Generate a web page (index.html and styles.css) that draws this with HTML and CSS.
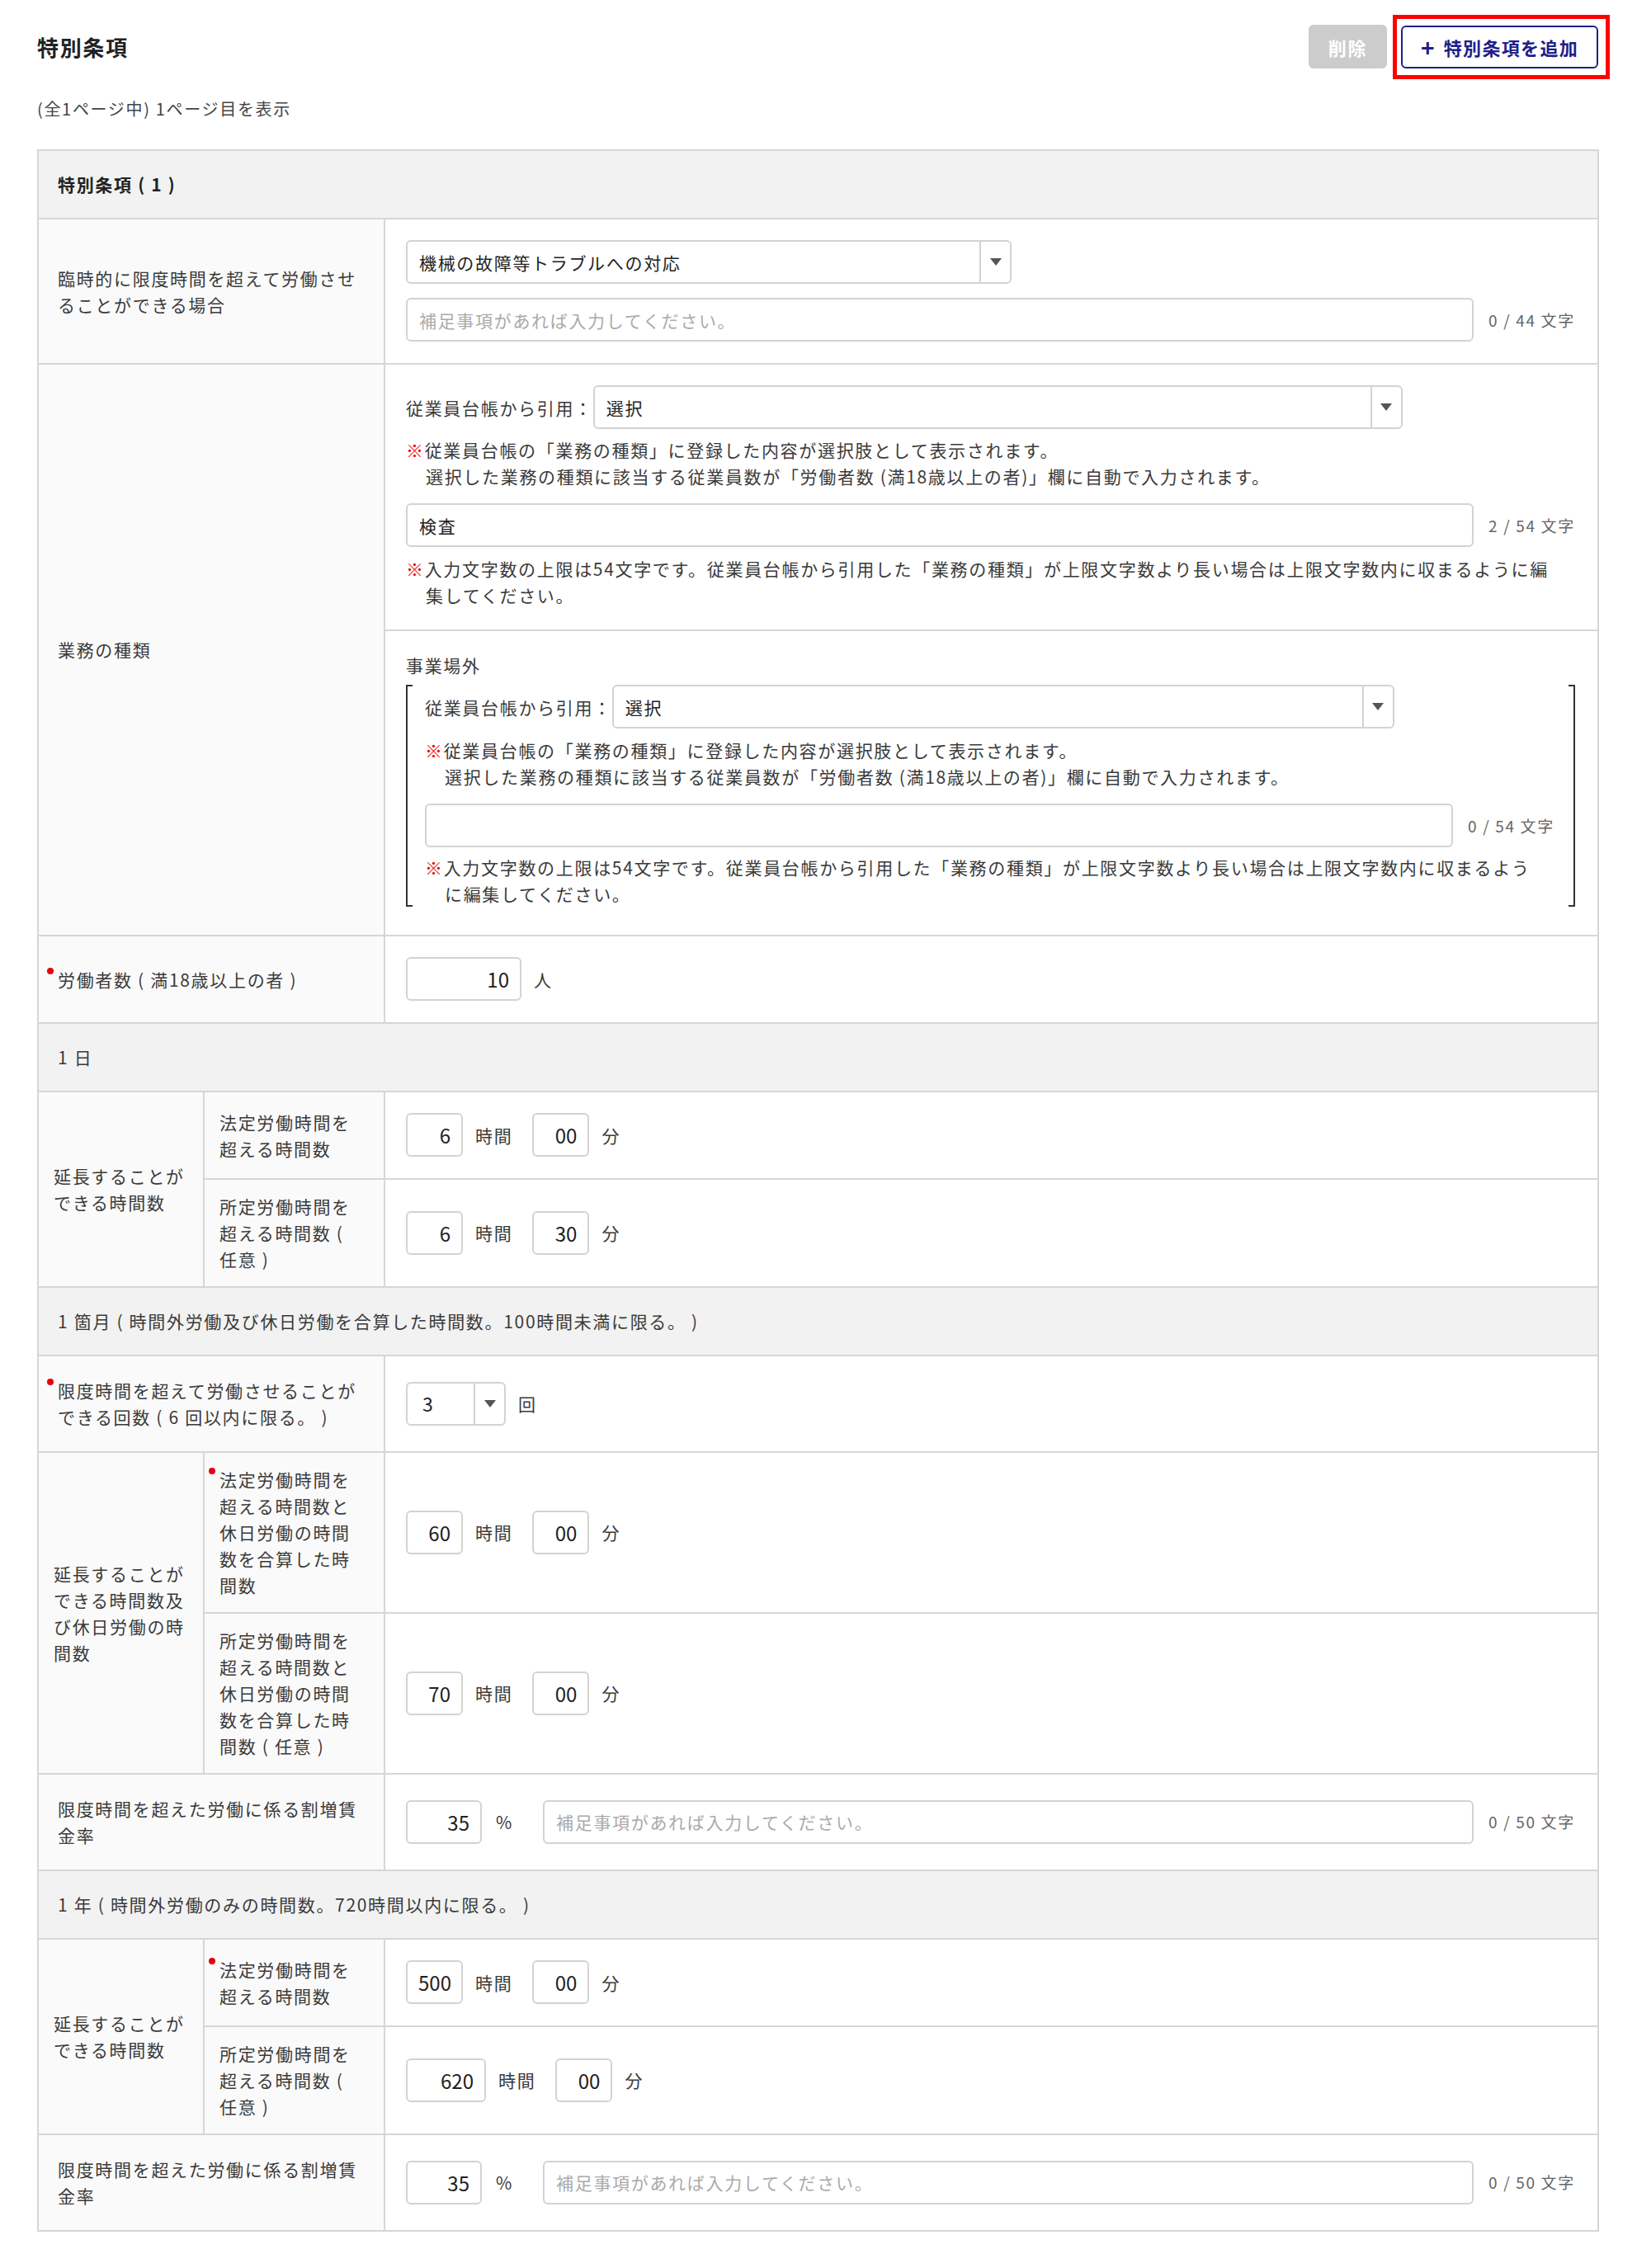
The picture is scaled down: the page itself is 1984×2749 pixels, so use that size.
FILE: index.html
```html
<!DOCTYPE html>
<html lang="ja">
<head>
    <meta charset="UTF-8">
    <meta name="viewport" content="width=device-width, initial-scale=1.0">
    <title>特別条項</title>
    <link rel="stylesheet" href="styles.css">
</head>
<body>
    <div class="page">
        <div class="page-head">
            <h1>特別条項</h1>
            <div class="actions">
                <button class="btn btn-delete" disabled>削除</button>
                <span class="highlight">
                    <button class="btn btn-add"><span class="plus">+</span>特別条項を追加</button>
                </span>
            </div>
        </div>

        <p class="pager">(全1ページ中) 1ページ目を表示</p>

        <table class="form-table">
            <colgroup>
                <col class="col-outer">
                <col class="col-inner">
                <col>
            </colgroup>

            <tr>
                <th colspan="3" class="section-title">特別条項 ( 1 )</th>
            </tr>

            <tr>
                <th colspan="2" class="label">臨時的に限度時間を超えて労働させ<br>ることができる場合</th>
                <td>
                    <div class="select select-reason">
                        <span class="select-value">機械の故障等トラブルへの対応</span>
                        <span class="select-arrow"><span class="caret"></span></span>
                    </div>
                    <div class="field-row">
                        <input class="text-input" type="text" placeholder="補足事項があれば入力してください。">
                        <span class="counter">0 / 44 文字</span>
                    </div>
                </td>
            </tr>

            <tr>
                <th colspan="2" rowspan="2" class="label">業務の種類</th>
                <td>
                    <div class="quote-row">
                        <span class="quote-label">従業員台帳から引用：</span>
                        <div class="select select-job">
                            <span class="select-value">選択</span>
                            <span class="select-arrow"><span class="caret"></span></span>
                        </div>
                    </div>
                    <p class="note"><span class="mark">※</span>従業員台帳の「業務の種類」に登録した内容が選択肢として表示されます。<br>選択した業務の種類に該当する従業員数が「労働者数 (満18歳以上の者)」欄に自動で入力されます。</p>
                    <div class="field-row">
                        <input class="text-input" type="text" value="検査">
                        <span class="counter">2 / 54 文字</span>
                    </div>
                    <p class="note"><span class="mark">※</span>入力文字数の上限は54文字です。従業員台帳から引用した「業務の種類」が上限文字数より長い場合は上限文字数内に収まるように編<br>集してください。</p>
                </td>
            </tr>
            <tr>
                <td class="offsite">
                    <p class="sub-heading">事業場外</p>
                    <div class="bracket">
                        <div class="quote-row">
                            <span class="quote-label">従業員台帳から引用：</span>
                            <div class="select select-job-sub">
                                <span class="select-value">選択</span>
                                <span class="select-arrow"><span class="caret"></span></span>
                            </div>
                        </div>
                        <p class="note"><span class="mark">※</span>従業員台帳の「業務の種類」に登録した内容が選択肢として表示されます。<br>選択した業務の種類に該当する従業員数が「労働者数 (満18歳以上の者)」欄に自動で入力されます。</p>
                        <div class="field-row">
                            <input class="text-input" type="text">
                            <span class="counter">0 / 54 文字</span>
                        </div>
                        <p class="note"><span class="mark">※</span>入力文字数の上限は54文字です。従業員台帳から引用した「業務の種類」が上限文字数より長い場合は上限文字数内に収まるよう<br>に編集してください。</p>
                    </div>
                </td>
            </tr>

            <tr>
                <th colspan="2" class="label"><div class="req">労働者数 ( 満18歳以上の者 )</div></th>
                <td>
                    <div class="inline">
                        <input class="num num-l" type="text" value="10"><span class="unit">人</span>
                    </div>
                </td>
            </tr>

            <tr>
                <th colspan="3" class="group">1 日</th>
            </tr>
            <tr>
                <th rowspan="2" class="outer-label">延長することが<br>できる時間数</th>
                <th class="sub-label">法定労働時間を<br>超える時間数</th>
                <td>
                    <div class="inline">
                        <input class="num" type="text" value="6"><span class="unit">時間</span>
                        <input class="num" type="text" value="00"><span class="unit">分</span>
                    </div>
                </td>
            </tr>
            <tr>
                <th class="sub-label">所定労働時間を<br>超える時間数 (<br>任意 )</th>
                <td>
                    <div class="inline">
                        <input class="num" type="text" value="6"><span class="unit">時間</span>
                        <input class="num" type="text" value="30"><span class="unit">分</span>
                    </div>
                </td>
            </tr>

            <tr>
                <th colspan="3" class="group">1 箇月 ( 時間外労働及び休日労働を合算した時間数。100時間未満に限る。 )</th>
            </tr>
            <tr>
                <th colspan="2" class="label"><div class="req">限度時間を超えて労働させることが<br>できる回数 ( 6 回以内に限る。 )</div></th>
                <td>
                    <div class="inline">
                        <div class="select select-count">
                            <span class="select-value">3</span>
                            <span class="select-arrow"><span class="caret"></span></span>
                        </div>
                        <span class="unit">回</span>
                    </div>
                </td>
            </tr>
            <tr>
                <th rowspan="2" class="outer-label">延長することが<br>できる時間数及<br>び休日労働の時<br>間数</th>
                <th class="sub-label"><div class="req">法定労働時間を<br>超える時間数と<br>休日労働の時間<br>数を合算した時<br>間数</div></th>
                <td>
                    <div class="inline">
                        <input class="num" type="text" value="60"><span class="unit">時間</span>
                        <input class="num" type="text" value="00"><span class="unit">分</span>
                    </div>
                </td>
            </tr>
            <tr>
                <th class="sub-label">所定労働時間を<br>超える時間数と<br>休日労働の時間<br>数を合算した時<br>間数 ( 任意 )</th>
                <td>
                    <div class="inline">
                        <input class="num" type="text" value="70"><span class="unit">時間</span>
                        <input class="num" type="text" value="00"><span class="unit">分</span>
                    </div>
                </td>
            </tr>
            <tr>
                <th colspan="2" class="label">限度時間を超えた労働に係る割増賃<br>金率</th>
                <td>
                    <div class="field-row rate-row">
                        <input class="num num-m" type="text" value="35"><span class="unit unit-rate">%</span>
                        <input class="text-input" type="text" placeholder="補足事項があれば入力してください。">
                        <span class="counter">0 / 50 文字</span>
                    </div>
                </td>
            </tr>

            <tr>
                <th colspan="3" class="group">1 年 ( 時間外労働のみの時間数。720時間以内に限る。 )</th>
            </tr>
            <tr>
                <th rowspan="2" class="outer-label">延長することが<br>できる時間数</th>
                <th class="sub-label"><div class="req">法定労働時間を<br>超える時間数</div></th>
                <td>
                    <div class="inline">
                        <input class="num" type="text" value="500"><span class="unit">時間</span>
                        <input class="num" type="text" value="00"><span class="unit">分</span>
                    </div>
                </td>
            </tr>
            <tr>
                <th class="sub-label">所定労働時間を<br>超える時間数 (<br>任意 )</th>
                <td>
                    <div class="inline">
                        <input class="num num-w" type="text" value="620"><span class="unit">時間</span>
                        <input class="num" type="text" value="00"><span class="unit">分</span>
                    </div>
                </td>
            </tr>
            <tr>
                <th colspan="2" class="label">限度時間を超えた労働に係る割増賃<br>金率</th>
                <td>
                    <div class="field-row rate-row">
                        <input class="num num-m" type="text" value="35"><span class="unit unit-rate">%</span>
                        <input class="text-input" type="text" placeholder="補足事項があれば入力してください。">
                        <span class="counter">0 / 50 文字</span>
                    </div>
                </td>
            </tr>
        </table>
    </div>
</body>
</html>
```

FILE: styles.css
```css
* {
    box-sizing: border-box;
}

body {
    margin: 0;
    background: #fff;
    color: #3a3a3a;
    font-family: "Noto Sans CJK JP", "Noto Sans", sans-serif;
    font-size: 21px;
    line-height: 32px;
    letter-spacing: 0.08em;
}

.page {
    padding: 30px 46px 44px 45px;
}

/* header */

.page-head {
    display: flex;
    align-items: center;
    justify-content: space-between;
}

.page-head h1 {
    margin: 0;
    font-size: 26px;
    font-weight: 700;
    color: #222;
}

.actions {
    display: flex;
    align-items: center;
    gap: 17px;
}

.btn {
    font: inherit;
    letter-spacing: inherit;
    font-weight: 700;
    border-radius: 6px;
    cursor: pointer;
}

.btn-delete {
    width: 95px;
    height: 53px;
    background: #cccccc;
    color: #fff;
    border: none;
    font-size: 22px;
}

.highlight {
    display: block;
    border: 5px solid #ff0000;
    padding: 8px 9px 8px 5px;
    margin: -13px -13px -13px -10px;
}

.btn-add {
    display: flex;
    align-items: center;
    justify-content: center;
    width: 239px;
    height: 52px;
    padding: 0;
    background: #fff;
    color: #1d2088;
    border: 2px solid #1d2088;
    font-size: 22px;
    letter-spacing: 0.06em;
}

.btn-add .plus {
    font-size: 28px;
    margin-right: 10px;
}

.pager {
    margin: 35px 0 0;
    font-size: 20px;
    line-height: 28px;
    color: #444;
}

/* table */

.form-table {
    width: 100%;
    margin-top: 35px;
    border-collapse: collapse;
    table-layout: fixed;
}

.col-outer {
    width: 201px;
}

.col-inner {
    width: 219px;
}

.form-table th,
.form-table td {
    border: 2px solid #d6d6d6;
    vertical-align: middle;
}

.form-table th {
    text-align: left;
    font-weight: 400;
    background: #fafafa;
}

.form-table td {
    padding: 25px 25px 26px;
    background: #fff;
}

.form-table .section-title {
    padding: 24px 23px 25px;
    background: #f2f2f2;
    font-weight: 700;
    color: #222;
}

.form-table .group {
    padding: 24px 23px 25px;
    background: #f2f2f2;
}

.form-table .label {
    padding: 25px 18px 26px 23px;
}

.form-table .outer-label {
    padding: 16px 18px 17px;
}

.form-table .sub-label {
    padding: 16px 18px 17px;
}

.req {
    position: relative;
}

.req::before {
    content: "";
    position: absolute;
    left: -13px;
    top: 2px;
    width: 8px;
    height: 8px;
    border-radius: 50%;
    background: #e60012;
}

/* form controls */

.select {
    display: flex;
    height: 53px;
    border: 2px solid #d3d3d3;
    border-radius: 6px;
    background: #fff;
    color: #222;
}

.select-value {
    flex: 1;
    display: flex;
    align-items: center;
    padding: 0 14px;
    white-space: nowrap;
}

.select-arrow {
    width: 37px;
    display: flex;
    align-items: center;
    justify-content: center;
    border-left: 2px solid #d3d3d3;
}

.caret {
    width: 0;
    height: 0;
    border-left: 7px solid transparent;
    border-right: 7px solid transparent;
    border-top: 9px solid #555;
}

.select-reason {
    width: 734px;
}

.select-job {
    width: 981px;
}

.select-job-sub {
    width: 948px;
}

.select-count {
    width: 121px;
}

.select-count .select-value {
    padding-left: 18px;
    font-size: 23px;
}

.text-input,
.num {
    height: 53px;
    border: 2px solid #d3d3d3;
    border-radius: 6px;
    font: inherit;
    letter-spacing: inherit;
    color: #222;
    background: #fff;
    outline: none;
}

.text-input {
    flex: 1;
    min-width: 0;
    padding: 0 14px;
}

.text-input::placeholder {
    color: #aaa;
}

.num {
    width: 69px;
    padding: 0 13px;
    text-align: right;
    font-size: 24px;
    letter-spacing: 0;
}

.num-l {
    width: 140px;
}

.num-m {
    width: 92px;
}

.num-w {
    width: 97px;
}

.field-row {
    display: flex;
    align-items: center;
    margin-top: 17px;
}

.rate-row {
    margin-top: 0;
}

.counter {
    flex: 0 0 125px;
    padding-left: 18px;
    font-size: 19px;
    color: #666;
    white-space: nowrap;
}

.inline {
    display: flex;
    align-items: center;
}

.unit {
    margin: 0 24px 0 15px;
}

.unit-rate {
    margin: 0 36px 0 17px;
}

.quote-row {
    display: flex;
    align-items: center;
}

.quote-label {
    white-space: nowrap;
}

.note {
    margin: 9px 0 0;
    padding-left: 24px;
    text-indent: -24px;
    white-space: nowrap;
}

.field-row + .note {
    margin-top: 10px;
}

.bracket .quote-row + .note {
    margin-top: 10px;
}

.bracket .field-row + .note {
    margin-top: 8px;
}

.mark {
    color: #ee0000;
}

/* 事業場外 */

.form-table .offsite {
    padding-bottom: 34px;
}

.sub-heading {
    margin: 0 0 8px;
}

.bracket {
    margin-right: 2px;
    padding: 0 21px;
    border-left: 2px solid #333;
    border-right: 2px solid #333;
    background:
        linear-gradient(#333, #333) left top / 6px 2px no-repeat,
        linear-gradient(#333, #333) right top / 6px 2px no-repeat,
        linear-gradient(#333, #333) left bottom / 6px 2px no-repeat,
        linear-gradient(#333, #333) right bottom / 6px 2px no-repeat;
}
```
